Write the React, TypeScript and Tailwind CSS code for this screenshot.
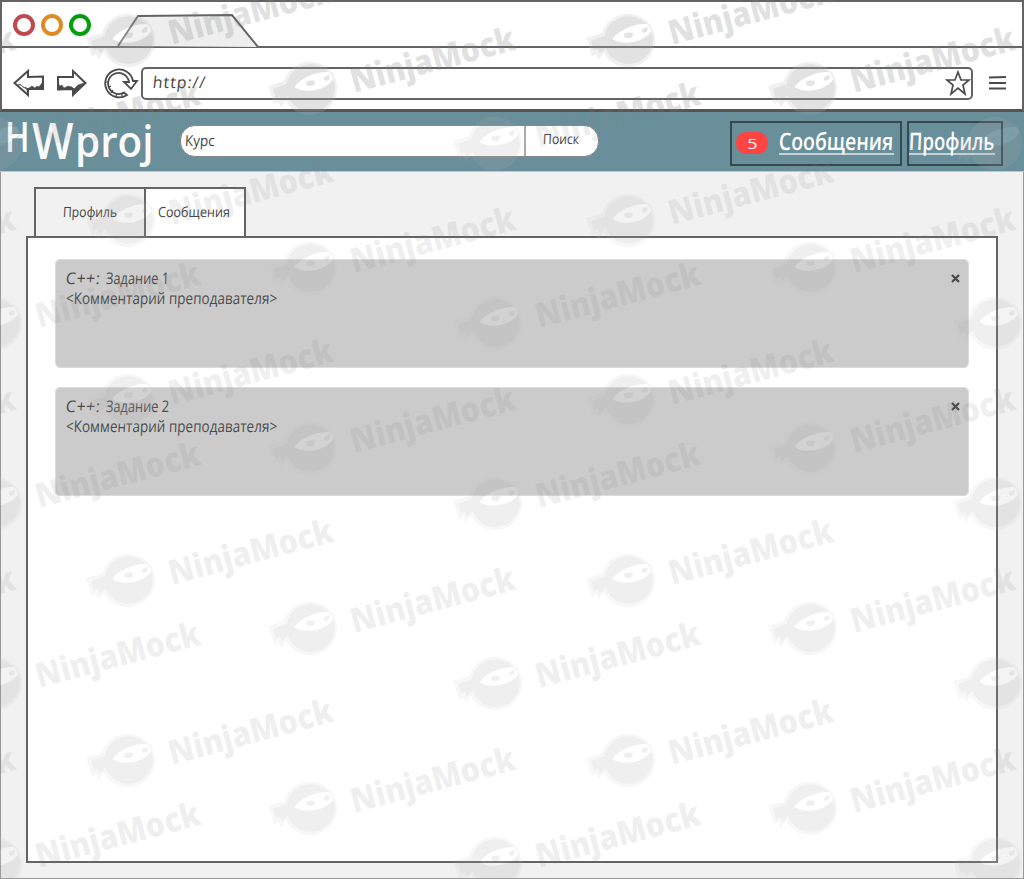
import type { ReactNode } from "react";

const FACES: [number, number][] = [];
for (const x of [-190, -5, 128, 310, 495, 628, 810, 995]) {
  const base = x === 128 || x === 628 ? 39 : x === -190 || x === 310 || x === 810 ? 87 : 142;
  for (let y = base; y < 900; y += 180) FACES.push([x, y]);
}

function Ninja({ x, y }: { x: number; y: number }) {
  return (
    <g transform={`translate(${x} ${y})`}>
      <g transform="translate(-1 0) scale(.97)">
        <path
          fillRule="evenodd"
          d="M-26-6A28 27.500 0 1 1-24 14L-29 21L-32 15L-36 18L-42-1ZM-15 0C-8-10 10-17 24-15C26-13 26-10 25-8C18 3-3 8-15 0Z"
          fill="#c0c0c0"
          fillOpacity=".12"
        />
        <path
          fillRule="evenodd"
          d="M-23-3A25 24.500 0 1 1-22 9L-28 15L-30 10L-34 12L-37 2ZM-15 0C-8-10 10-17 24-15C26-13 26-10 25-8C18 3-3 8-15 0Z"
          fill="#808080"
          fillOpacity=".065"
        />
        <path d="M-15 0C-8-10 10-17 24-15C26-13 26-10 25-8C18 3-3 8-15 0Z" fill="#fff" fillOpacity=".14" />
        <path d="M-3-5C-2-7 5-7 6-6C6-1 4-1 1-1C-2-1-3-2-3-5Z" fill="#808080" fillOpacity=".12" />
        <path d="M15-9Q18-13 21-12Q22-7 19-7Q16-5 15-9Z" fill="#808080" fillOpacity=".12" />
      </g>
      <text
        transform="translate(44 6) rotate(-15)"
        textLength="169"
        lengthAdjust="spacingAndGlyphs"
        fontFamily="'Noto Sans', 'Open Sans', sans-serif"
        fontSize="34"
        fontWeight="900"
        fill="#808080"
        fillOpacity=".12"
      >
        NinjaMock
      </text>
    </g>
  );
}

function Watermark({ limit = 900 }: { limit?: number }) {
  return (
    <svg className="block h-[879px] w-[1024px]" viewBox="0 0 1024 879" aria-hidden>
      {FACES.filter(([, y]) => y < limit).map(([x, y]) => (
        <Ninja key={`${x}:${y}`} x={x} y={y} />
      ))}
    </svg>
  );
}

function BrowserChrome() {
  return (
    <div className="flex h-[112px] flex-col border-2 border-b-[3px] border-[#646464] border-b-[#555] bg-white">
      <div className="flex h-[46px] border-b-2 border-[#646464]">
        <div className="flex gap-[6px] pt-[12px] pl-[11px]">
          <i className="size-[22px] rounded-full border-[4px] border-[#bd4b4b]" />
          <i className="size-[22px] rounded-full border-[4px] border-[#de8b25]" />
          <i className="size-[22px] rounded-full border-[4px] border-[#00a00d]" />
        </div>
        <svg className="mt-[11px] ml-[24px] h-[34px] w-[144px]" viewBox="0 0 144 34">
          <path d="M3 33L23 3L117 2L143 34" fill="#eee" stroke="#646464" strokeWidth="2" />
        </svg>
      </div>
      <div className="flex flex-1 items-center pt-[9px] pl-[10px]">
        <svg className="h-[30px] w-[78px]" viewBox="0 0 78 30" fill="none" stroke="#4b4b4b" strokeWidth="2">
          <path d="M2.500 15L16 3V9L31 8.500V21L16 21V27Z" />
          <path d="M73.500 15L61 3V9L46 9V21.500L61 21V27Z" />
          <path d="M6 17L9 17L12 20L14 19L16 27V21L31 21L30 15L27 19L25 18L23 20L20 18L17 20L14 21L8 16ZM46 21.500V15L48 18L50 17L52 20L54 19L56 18L60 19L62 21L66 17L72 15L62 26L61 21Z" fill="#4b4b4b" strokeWidth="0.500" />
        </svg>
        <svg className="ml-[13px] h-[32px] w-[36px]" viewBox="0 0 36 32" fill="none" stroke="#4b4b4b" strokeWidth="1.800">
          <path d="M24 28A14 14 0 1 1 30 14L34 14L28 22L21 15L26 15A10.500 10.500 0 1 0 21 25.500Z" />
          <path d="M8 26L10 23M13 29L14 26M19 29V26M5 21L8 19M3 15H6" strokeWidth="1.200" />
        </svg>
        <div className="ml-[2px] flex h-[33px] w-[832px] items-center justify-between rounded-[5px] border-2 border-[#646464] pl-[10px] text-[16px] font-medium text-[#444]">
          <span className="-mt-[2px] -skew-x-6 tracking-[0.900px]">http://</span>
          <svg className="size-[26px]" viewBox="0 0 26 26" fill="none" stroke="#4b4b4b" strokeWidth="1.700">
            <path d="M13 2L16 10L24 10L18 15L20 24L13 18L6 24L8 15L2 10L10 10Z" />
          </svg>
        </div>
        <svg className="ml-[15px] h-[16px] w-[20px]" viewBox="0 0 20 16" stroke="#4b4b4b" strokeWidth="2">
          <path d="M1 2.500L18 2M1 8H18M1 13.500H18" />
        </svg>
      </div>
    </div>
  );
}

function NavBox({ className, children }: { className: string; children: ReactNode }) {
  return <div className={`flex h-[45px] items-start border-2 border-[#36494f] text-white ${className}`}>{children}</div>;
}

function Header() {
  return (
    <header className="flex h-[60px] items-start border-b border-[#b9c9ce] bg-[#698f9b]">
      <h1 className="flex h-[59px] w-[180px] items-start pl-[5px] font-semibold text-[#fafafa]">
        <span className="w-[27px] origin-left scale-x-[.8] text-[41px] leading-[49px]">H</span>
        <span className="w-[43px] origin-left scale-x-[.88] text-[50px] leading-[56px]">W</span>
        <span className="origin-left scale-x-[.94] text-[43px] leading-[58px]">proj</span>
      </h1>
      <div className="mt-[13px] flex h-[32px] w-[419px] overflow-hidden rounded-[15px] border border-[#888] bg-white text-[15px] leading-[28px] font-medium text-[#444]">
        <span className="w-[343px] pl-[4px]">
          <span className="inline-block origin-left scale-x-[.9] -skew-x-3">Курс</span>
        </span>
        <span className="flex-1 border-l-2 border-[#aaa] pl-[17px] text-[14px] leading-[26px]">
          <span className="inline-block origin-left scale-x-[.87] -skew-x-3">Поиск</span>
        </span>
      </div>
      <NavBox className="mt-[9px] ml-[131px] w-[172px] pl-[4px]">
        <b className="mt-[9px] flex h-[22px] w-[32px] items-center justify-center rounded-[10px] bg-[#ff4444] text-[15px] font-normal">
          <span className="scale-x-[1.2]">5</span>
        </b>
        <a className="mt-[2px] ml-[11px] h-[30px] w-[115px] border-b-2 border-[#c3d2d6] text-[24px] leading-[31px] font-semibold whitespace-nowrap">
          <span className="inline-block origin-left scale-x-[.81] -skew-x-3">Сообщения</span>
        </a>
      </NavBox>
      <NavBox className="mt-[9px] ml-[5px] w-[96px]">
        <a className="mt-[2px] h-[30px] w-[86px] border-b-2 border-[#c3d2d6] text-[24px] leading-[31px] font-semibold whitespace-nowrap">
          <span className="inline-block origin-left scale-x-[.77] -skew-x-3">Профиль</span>
        </a>
      </NavBox>
    </header>
  );
}

function Card({ title }: { title: string }) {
  return (
    <article className="flex h-[109px] justify-between rounded-[5px] border border-[#dcdcdc] bg-[#cbcbcb] pt-[8px] pr-[8px] pl-[10px] text-[16px] leading-[20px] font-medium text-[#4b4b4b]">
      <div className="whitespace-nowrap">
        <p className="flex">
          <span className="w-[40px] -skew-x-6 tracking-[0.500px]">C++:</span>
          <span className="origin-left scale-x-[.8] -skew-x-3">{title}</span>
        </p>
        <p className="origin-left scale-x-[.845] -skew-x-3">&lt;Комментарий преподавателя&gt;</p>
      </div>
      <svg className="mt-[6px] size-[9px]" viewBox="0 0 9 9" stroke="#4b4b4b" strokeWidth="2.300">
        <path d="M1 1L8 8M8 1L1 8" />
      </svg>
    </article>
  );
}

export default function App() {
  return (
    <div className="relative h-[879px] w-[1024px] overflow-hidden bg-[#f1f1f1] font-['Open_Sans',sans-serif]">
      <BrowserChrome />
      <div className="h-[767px] border-x border-b border-[#999]">
        <div className="-mx-px">
          <Header />
        </div>
        <nav className="mt-[15px] ml-[33px] flex h-[49px] w-[212px] border-2 border-b-0 border-[#646464] text-[14px] leading-[45px] font-medium text-[#444]">
          <span className="w-[110px] border-r-2 border-[#646464] pl-[27px]">
            <span className="inline-block origin-left scale-x-[.87] -skew-x-3">Профиль</span>
          </span>
          <span className="flex-1 bg-white pl-[12px]">
            <span className="inline-block origin-left scale-x-[.9] -skew-x-3">Сообщения</span>
          </span>
        </nav>
        <main className="ml-[25px] flex h-[627px] w-[972px] flex-col gap-[19px] border-2 border-[#646464] bg-white pt-[21px] pr-[27px] pl-[27px]">
          <Card title="Задание 1" />
          <Card title="Задание 2" />
        </main>
      </div>
      <div className="pointer-events-none absolute inset-0">
        <Watermark />
      </div>
      <div className="pointer-events-none absolute inset-x-0 top-0 h-[111px] overflow-hidden">
        <Watermark limit={150} />
      </div>
    </div>
  );
}
